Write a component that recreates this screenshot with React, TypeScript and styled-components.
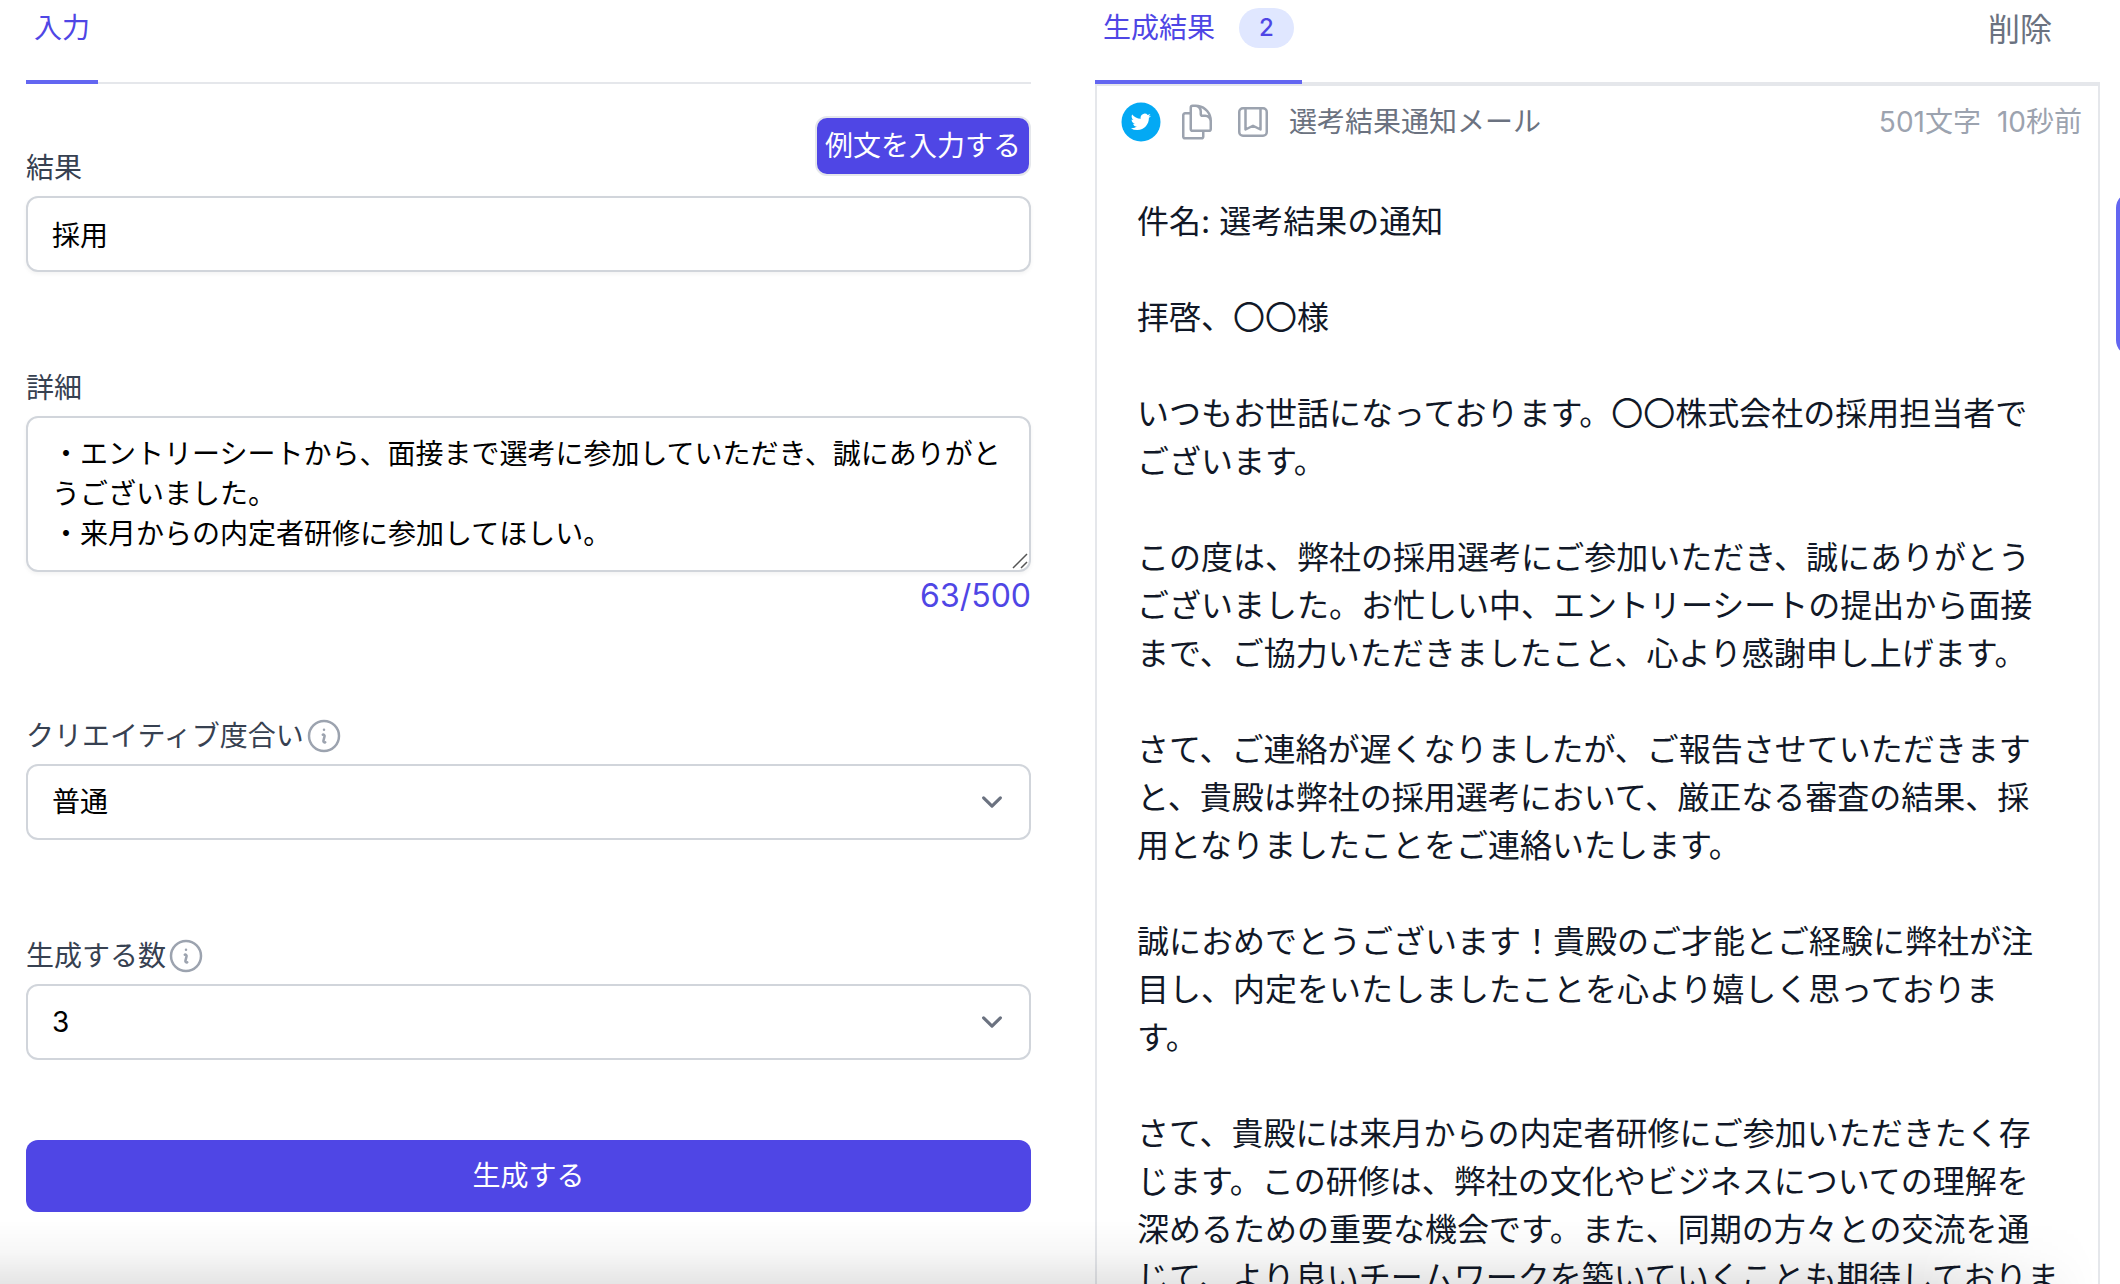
import React, { useState } from "react";
import styled, { createGlobalStyle } from "styled-components";

const indigo = "#4f46e5";
const indigoLight = "#6366f1";
const line = "#e5e7eb";
const fieldLine = "#d1d5db";

const GlobalStyle = createGlobalStyle`
  *, *::before, *::after { box-sizing: border-box; }
  body {
    margin: 0;
    background: #fff;
    font-family: Inter, "Noto Sans CJK JP", sans-serif;
    font-size: 28px;
    line-height: 40px;
    color: #111827;
  }
  button, input, textarea, select { font: inherit; }
  svg { display: block; flex-shrink: 0; }
`;

const Page = styled.main`
  display: grid;
  grid-template-columns: minmax(0, 1fr) minmax(0, 1fr);
  column-gap: 64px;
  height: 100vh;
  overflow: hidden;
  padding: 0 20px 0 26px;
`;

const Panel = styled.section`
  min-width: 0;
`;

const TabBar = styled.header`
  display: flex;
  align-items: flex-start;
  justify-content: space-between;
  padding-top: 8px;
  border-bottom: 2px solid ${line};
`;

const Tab = styled.button`
  display: flex;
  align-items: center;
  gap: 24px;
  margin-bottom: -2px;
  padding: 0 8px 32px;
  border: 0;
  border-bottom: 4px solid ${indigoLight};
  background: none;
  color: ${indigo};
  cursor: pointer;
`;

const Count = styled.span`
  padding: 4px 20px;
  border-radius: 20px;
  background: #e0e7ff;
  font-size: 24px;
  font-weight: 500;
  line-height: 32px;
`;

const DeleteButton = styled.button`
  padding: 0 48px 0 0;
  border: 0;
  background: none;
  color: #6b7280;
  font-size: 32px;
  line-height: 44px;
  cursor: pointer;
`;

const Form = styled.form`
  display: flex;
  flex-direction: column;
  padding-top: 32px;
`;

const Fields = styled.div`
  display: flex;
  flex-direction: column;
  gap: 96px;
  margin-bottom: 80px;
`;

const Field = styled.div`
  display: flex;
  flex-direction: column;
`;

const FieldHead = styled.div`
  display: flex;
  align-items: flex-end;
  justify-content: space-between;
  margin-bottom: 8px;
`;

const Label = styled.label`
  display: flex;
  align-items: center;
  color: #374151;
`;

const SampleButton = styled.button`
  margin-bottom: 12px;
  padding: 8px;
  border: 2px solid ${line};
  border-radius: 12px;
  background: ${indigo};
  color: #fff;
  cursor: pointer;
`;

const control = `
  width: 100%;
  margin: 0;
  padding: 16px 24px;
  border: 2px solid ${fieldLine};
  border-radius: 12px;
  background: #fff;
  color: #000;
`;

const TextInput = styled.input`
  ${control}
  height: 76px;
  box-shadow: 0 2px 4px rgba(0, 0, 0, 0.05);
`;

const TextArea = styled.textarea`
  ${control}
  display: block;
  height: 156px;
  overflow: hidden;
  resize: none;
  box-shadow: 0 2px 4px rgba(0, 0, 0, 0.05);
`;

const ControlWrap = styled.div`
  position: relative;
`;

const Grip = styled.svg`
  position: absolute;
  right: 3px;
  bottom: 3px;
`;

const Select = styled.select`
  ${control}
  height: 76px;
  appearance: none;
`;

const Chevron = styled.svg`
  position: absolute;
  top: 17px;
  right: 18px;
  pointer-events: none;
`;

const Counter = styled.output`
  align-self: flex-end;
  color: ${indigo};
  font-size: 32px;
  line-height: 48px;
`;

const SubmitButton = styled.button`
  padding: 16px;
  border: 0;
  border-radius: 12px;
  background: ${indigo};
  color: #fff;
  cursor: pointer;
`;

const ResultCard = styled.article`
  min-height: 100vh;
  border: 2px solid ${line};
`;

const ResultHead = styled.div`
  display: flex;
  align-items: center;
  padding: 16px 16px 0 24px;
  color: #9ca3af;
`;

const IconButton = styled.button`
  display: flex;
  margin-right: 16px;
  padding: 0;
  border: 0;
  background: none;
  color: inherit;
  cursor: pointer;
`;

const ResultTitle = styled.h2`
  flex: 1;
  margin: 0;
  color: #6b7280;
  font-size: 28px;
  font-weight: 400;
`;

const Meta = styled.span`
  margin-left: 16px;
`;

const ResultBody = styled.p`
  margin: 0;
  padding: 56px 32px 0 40px;
  font-size: 32px;
  line-height: 48px;
  white-space: pre-line;
`;

const BottomShade = styled.div`
  position: fixed;
  right: 0;
  bottom: 0;
  left: 0;
  height: 64px;
  background: linear-gradient(to bottom, rgba(0, 0, 0, 0), rgba(0, 0, 0, 0.03) 50%, rgba(0, 0, 0, 0.1));
  mask-image: linear-gradient(to right, #000 calc(100% - 200px), transparent calc(100% - 24px));
  pointer-events: none;
`;

const SideTab = styled.button`
  position: fixed;
  top: 192px;
  right: -60px;
  width: 64px;
  height: 164px;
  padding: 0;
  border: 0;
  border-radius: 16px;
  background: ${indigoLight};
  cursor: pointer;
`;

const InfoIcon = () => (
  <svg width="40" height="40" viewBox="0 0 24 24" fill="none" stroke="#9ca3af" strokeWidth="1.5" strokeLinecap="round" strokeLinejoin="round" aria-hidden="true">
    <path d="M11.25 11.25l.041-.02a.75.75 0 011.063.852l-.708 2.836a.75.75 0 001.063.853l.041-.021M21 12a9 9 0 11-18 0 9 9 0 0118 0zm-9-3.75h.008v.008H12V8.25z" />
  </svg>
);

const TwitterIcon = () => (
  <svg width="40" height="40" viewBox="0 0 40 40" aria-hidden="true">
    <circle cx="20" cy="20" r="19.5" fill="#03a9f4" />
    <g transform="translate(9.8 9.8) scale(.84)">
      <path fill="#fff" d="M23.953 4.57a10 10 0 01-2.825.775 4.958 4.958 0 002.163-2.723c-.951.555-2.005.959-3.127 1.184a4.92 4.92 0 00-8.384 4.482C7.69 8.095 4.067 6.13 1.64 3.162a4.822 4.822 0 00-.666 2.475c0 1.71.87 3.213 2.188 4.096a4.904 4.904 0 01-2.228-.616v.06a4.923 4.923 0 003.946 4.827 4.996 4.996 0 01-2.212.085 4.936 4.936 0 004.604 3.417 9.867 9.867 0 01-6.102 2.105c-.39 0-.779-.023-1.17-.067a13.995 13.995 0 007.557 2.209c9.053 0 13.998-7.496 13.998-13.985 0-.21 0-.42-.015-.63A9.935 9.935 0 0024 4.59z" />
    </g>
  </svg>
);

const CopyIcon = () => (
  <svg width="40" height="40" viewBox="0 0 24 24" fill="none" stroke="currentColor" strokeWidth="1.5" strokeLinecap="round" strokeLinejoin="round" aria-hidden="true">
    <path d="M15.75 17.25v3.375c0 .621-.504 1.125-1.125 1.125h-9.75a1.125 1.125 0 01-1.125-1.125V7.875c0-.621.504-1.125 1.125-1.125H6.75a9.06 9.06 0 011.5.124m7.5 10.376h3.375c.621 0 1.125-.504 1.125-1.125V11.25c0-4.46-3.243-8.161-7.5-8.876a9.06 9.06 0 00-1.5-.124H9.375c-.621 0-1.125.504-1.125 1.125v3.5m7.5 10.375H9.375a1.125 1.125 0 01-1.125-1.125v-9.25m12 6.625v-1.875a3.375 3.375 0 00-3.375-3.375h-1.5a1.125 1.125 0 01-1.125-1.125v-1.5a3.375 3.375 0 00-3.375-3.375H9.75" />
  </svg>
);

const BookmarkIcon = () => (
  <svg width="40" height="40" viewBox="0 0 24 24" fill="none" stroke="currentColor" strokeWidth="1.5" strokeLinecap="round" strokeLinejoin="round" aria-hidden="true">
    <path d="M16.5 3.75V16.5L12 14.25 7.5 16.5V3.75m9 0H18A2.25 2.25 0 0120.25 6v12A2.25 2.25 0 0118 20.25H6A2.25 2.25 0 013.75 18V6A2.25 2.25 0 016 3.75h1.5m9 0h-9" />
  </svg>
);

const ChevronIcon = () => (
  <Chevron width="42" height="42" viewBox="0 0 20 20" fill="none" stroke="#6b7280" strokeWidth="1.5" strokeLinecap="round" strokeLinejoin="round" aria-hidden="true">
    <path d="M6 8l4 4 4-4" />
  </Chevron>
);

const detailText = `・エントリーシートから、面接まで選考に参加していただき、誠にありがとうございました。
・来月からの内定者研修に参加してほしい。`;

const resultText = `件名: 選考結果の通知

拝啓、〇〇様

いつもお世話になっております。〇〇株式会社の採用担当者で
ございます。

この度は、弊社の採用選考にご参加いただき、誠にありがとう
ございました。お忙しい中、エントリーシートの提出から面接
まで、ご協力いただきましたこと、心より感謝申し上げます。

さて、ご連絡が遅くなりましたが、ご報告させていただきます
と、貴殿は弊社の採用選考において、厳正なる審査の結果、採
用となりましたことをご連絡いたします。

誠におめでとうございます！貴殿のご才能とご経験に弊社が注
目し、内定をいたしましたことを心より嬉しく思っておりま
す。

さて、貴殿には来月からの内定者研修にご参加いただきたく存
じます。この研修は、弊社の文化やビジネスについての理解を
深めるための重要な機会です。また、同期の方々との交流を通
じて、より良いチームワークを築いていくことも期待しておりま`;

export default function App() {
  const [result, setResult] = useState("採用");
  const [detail, setDetail] = useState(detailText);

  return (
    <>
      <GlobalStyle />
      <Page>
        <Panel>
          <TabBar>
            <Tab type="button">入力</Tab>
          </TabBar>
          <Form onSubmit={(e) => e.preventDefault()}>
            <Fields>
              <Field>
                <FieldHead>
                  <Label htmlFor="result">結果</Label>
                  <SampleButton type="button">例文を入力する</SampleButton>
                </FieldHead>
                <TextInput id="result" value={result} onChange={(e) => setResult(e.target.value)} />
              </Field>
              <Field>
                <FieldHead>
                  <Label htmlFor="detail">詳細</Label>
                </FieldHead>
                <ControlWrap>
                  <TextArea id="detail" value={detail} onChange={(e) => setDetail(e.target.value)} />
                  <Grip width="16" height="16" viewBox="0 0 16 16" stroke="#555" strokeWidth="1.5" aria-hidden="true">
                    <path d="M1 15L15 1M9 15l6-6" />
                  </Grip>
                </ControlWrap>
                <Counter htmlFor="detail">63/500</Counter>
              </Field>
              <Field>
                <FieldHead>
                  <Label htmlFor="creativity">
                    クリエイティブ度合い
                    <InfoIcon />
                  </Label>
                </FieldHead>
                <ControlWrap>
                  <Select id="creativity" defaultValue="普通">
                    <option>普通</option>
                  </Select>
                  <ChevronIcon />
                </ControlWrap>
              </Field>
              <Field>
                <FieldHead>
                  <Label htmlFor="amount">
                    生成する数
                    <InfoIcon />
                  </Label>
                </FieldHead>
                <ControlWrap>
                  <Select id="amount" defaultValue="3">
                    <option>3</option>
                  </Select>
                  <ChevronIcon />
                </ControlWrap>
              </Field>
            </Fields>
            <SubmitButton type="submit">生成する</SubmitButton>
          </Form>
        </Panel>
        <Panel>
          <TabBar>
            <Tab type="button">
              生成結果<Count>2</Count>
            </Tab>
            <DeleteButton type="button">削除</DeleteButton>
          </TabBar>
          <ResultCard>
            <ResultHead>
              <IconButton type="button" aria-label="Twitter">
                <TwitterIcon />
              </IconButton>
              <IconButton type="button" aria-label="コピー">
                <CopyIcon />
              </IconButton>
              <IconButton type="button" aria-label="保存">
                <BookmarkIcon />
              </IconButton>
              <ResultTitle>選考結果通知メール</ResultTitle>
              <Meta>501文字</Meta>
              <Meta>10秒前</Meta>
            </ResultHead>
            <ResultBody>{resultText}</ResultBody>
          </ResultCard>
        </Panel>
      </Page>
      <BottomShade />
      <SideTab type="button" aria-label="メニュー" />
    </>
  );
}
